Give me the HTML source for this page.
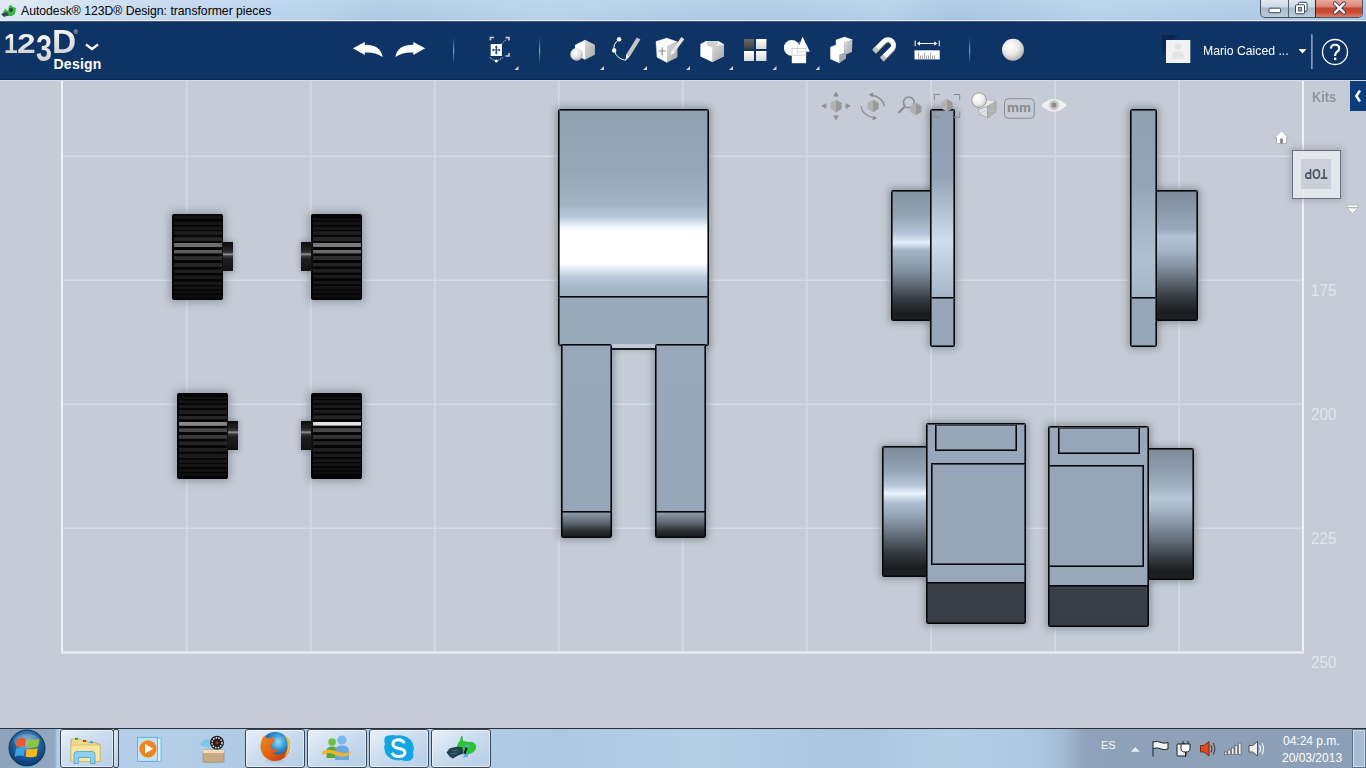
<!DOCTYPE html>
<html><head><meta charset="utf-8">
<style>
*{margin:0;padding:0;box-sizing:border-box}
html,body{width:1366px;height:768px;overflow:hidden;font-family:"Liberation Sans",sans-serif}
body{position:relative;background:#c5ccd6}
.a{position:absolute}
#title{left:0;top:0;width:1366px;height:22px;background:linear-gradient(180deg,transparent 20px,#e0ecf8 20px,#e0ecf8 21px,#4e5866 21px),linear-gradient(180deg,rgba(255,255,255,.12),rgba(255,255,255,0) 20px),linear-gradient(100deg,#dde8f3 0%,#c5d9ee 10%,#b9d3ec 20%,#b6d1ea 23%,#aec9e4 28%,#b6d1ea 40%,#adc9e5 55%,#b3cfe9 65%,#a8c5e2 70%,#b5d0ea 80%,#a9c6e3 100%)}
#tb{left:0;top:22px;width:1366px;height:59px;background:linear-gradient(180deg,#0a2d61 0,#0e3466 1px,#0e3466 57px,#032a5e 57px,#032a5e 58px,#d5d9e1 58px)}
#task{left:0;top:728px;width:1366px;height:40px;background:linear-gradient(180deg,#aac4de 0%,#b3cde6 100%);border-top:1px solid #3d4f63}
.gv{top:80px;width:1px;height:572px;background:#d6dbe3;box-shadow:1px 0 0 #cdd3dc}
.gvl{box-shadow:-1px 0 0 #cdd3dc}
.gh{left:62px;height:1px;width:1241px;background:#d6dbe3;box-shadow:0 -1px 0 #cdd3dc}
.bd{background:#eef1f5}
.lbl{left:1311px;width:40px;font-size:16.5px;color:#e2e6eb;line-height:18px;transform:scaleX(.93);transform-origin:0 0}
.sh{box-shadow:0 0 7px 2px rgba(60,68,82,.42);border-radius:2px}
.gsh{box-shadow:0 0 8px 2px rgba(60,70,85,.4)}
.ol{border:1px solid #050607;box-shadow:inset 0 0 0 1px rgba(8,9,11,.6);border-radius:1.5px}
.logo{font-weight:bold;color:#f0f0f0;background:linear-gradient(180deg,#fff,#c8c8c8);-webkit-background-clip:text;-webkit-text-fill-color:transparent}
</style></head><body>
<!-- grid -->
<div class="a gv" style="left:186px"></div>
<div class="a gv" style="left:310px"></div>
<div class="a gv" style="left:434px"></div>
<div class="a gv" style="left:558px"></div>
<div class="a gv" style="left:682px"></div>
<div class="a gv" style="left:806px"></div>
<div class="a gv gvl" style="left:931px"></div>
<div class="a gv gvl" style="left:1055px"></div>
<div class="a gv gvl" style="left:1179px"></div>
<div class="a gh" style="top:156px"></div>
<div class="a gh" style="top:280px"></div>
<div class="a gh" style="top:404px"></div>
<div class="a gh" style="top:528px"></div>
<div class="a bd" style="left:61px;top:80px;width:2px;height:573px"></div>
<div class="a bd" style="left:1302px;top:80px;width:2px;height:573px"></div>
<div class="a" style="left:61px;top:651px;width:1243px;height:3px;background:linear-gradient(180deg,#d9dde4,#e9ecf0 40%,#e9ecf0 60%,#d3d8df)"></div>
<div class="a lbl" style="top:157px">150</div>
<div class="a lbl" style="top:281px">175</div>
<div class="a lbl" style="top:405px">200</div>
<div class="a lbl" style="top:529px">225</div>
<div class="a lbl" style="top:653px">250</div>
<!--PIECES-->
<div class="a gsh" style="left:172px;top:214px;width:51px;height:86px;background:#050505;border-radius:2px"></div>
<div class="a" style="left:173.5px;top:214px;width:48px;height:86px;background:linear-gradient(180deg,#050505 0px,#050505 1.4px,#111 1.9px,#111 4.9px,#050505 5.4px,#050505 7.3px,#141414 7.8px,#141414 10.6px,#050505 11.1px,#050505 12.4px,#181818 12.9px,#181818 15.5px,#050505 16.0px,#050505 17.1px,#1e1e1e 17.6px,#1e1e1e 20.4px,#050505 20.9px,#050505 23.1px,#262626 23.6px,#262626 26.7px,#050505 27.2px,#050505 29.0px,#6e6e6e 29.5px,#6e6e6e 32.7px,#050505 33.2px,#050505 35.5px,#5c5c5c 36.0px,#5c5c5c 39.2px,#050505 39.7px,#050505 42.1px,#2e2e2e 42.6px,#2e2e2e 45.8px,#050505 46.3px,#050505 48.8px,#242424 49.3px,#242424 52.5px,#050505 53.0px,#050505 55.3px,#1f1f1f 55.8px,#1f1f1f 59.0px,#050505 59.5px,#050505 61.3px,#1b1b1b 61.8px,#1b1b1b 64.8px,#050505 65.3px,#050505 67.3px,#171717 67.8px,#171717 70.5px,#050505 71.0px,#050505 72.1px,#141414 72.6px,#141414 74.9px,#050505 75.4px,#050505 76.4px,#111 76.9px,#111 79.1px,#050505 79.6px,#050505 80.6px,#0f0f0f 81.1px,#0f0f0f 83.3px,#050505 83.8px,#050505 86px)"></div>
<div class="a" style="left:223px;top:242px;width:10px;height:29px;background:linear-gradient(180deg,#0a0a0a 0,#222 8px,#3a3a3a 11px,#a0a0a0 12px,#3a3a3a 14px,#1e1e1e 17px,#111 29px);box-shadow:0 0 5px 1px rgba(60,70,85,.35)"></div>
<div class="a gsh" style="left:311px;top:214px;width:51px;height:86px;background:#050505;border-radius:2px"></div>
<div class="a" style="left:312.5px;top:214px;width:48px;height:86px;background:linear-gradient(180deg,#050505 0px,#050505 3.8px,#111 4.3px,#111 6.3px,#050505 6.8px,#050505 7.6px,#141414 8.1px,#141414 10.4px,#050505 10.9px,#050505 12.4px,#181818 12.9px,#181818 15.4px,#050505 15.9px,#050505 17.1px,#1e1e1e 17.6px,#1e1e1e 20.4px,#050505 20.9px,#050505 23.0px,#262626 23.5px,#262626 26.7px,#050505 27.2px,#050505 29.0px,#7a7a7a 29.5px,#7a7a7a 32.7px,#050505 33.2px,#050505 35.5px,#6a6a6a 36.0px,#6a6a6a 39.2px,#050505 39.7px,#050505 42.0px,#2e2e2e 42.5px,#2e2e2e 45.7px,#050505 46.2px,#050505 48.5px,#242424 49.0px,#242424 52.2px,#050505 52.7px,#050505 54.7px,#1f1f1f 55.2px,#1f1f1f 58.3px,#050505 58.8px,#050505 60.6px,#1b1b1b 61.1px,#1b1b1b 64.1px,#050505 64.6px,#050505 66.6px,#171717 67.1px,#171717 69.9px,#050505 70.4px,#050505 71.6px,#141414 72.1px,#141414 74.5px,#050505 75.0px,#050505 76.3px,#111 76.8px,#111 79.1px,#050505 79.6px,#050505 80.6px,#0f0f0f 81.1px,#0f0f0f 83.2px,#050505 83.7px,#050505 86px)"></div>
<div class="a" style="left:301px;top:242px;width:10px;height:29px;background:linear-gradient(180deg,#0a0a0a 0,#222 8px,#3a3a3a 11px,#a0a0a0 12px,#3a3a3a 14px,#1e1e1e 17px,#111 29px);box-shadow:0 0 5px 1px rgba(60,70,85,.35)"></div>
<div class="a gsh" style="left:177px;top:393px;width:51px;height:86px;background:#050505;border-radius:2px"></div>
<div class="a" style="left:178.5px;top:393px;width:48px;height:86px;background:linear-gradient(180deg,#050505 0px,#050505 3.5px,#111 4.0px,#111 6.0px,#050505 6.5px,#050505 7.3px,#141414 7.8px,#141414 10.0px,#050505 10.5px,#050505 11.7px,#181818 12.2px,#181818 14.8px,#050505 15.3px,#050505 17.1px,#1e1e1e 17.6px,#1e1e1e 20.5px,#050505 21.0px,#050505 22.5px,#262626 23.0px,#262626 26.1px,#050505 26.6px,#050505 28.7px,#8a8a8a 29.2px,#8a8a8a 32.4px,#050505 32.9px,#050505 35.2px,#4a4a4a 35.7px,#4a4a4a 38.9px,#050505 39.4px,#050505 41.7px,#3a3a3a 42.2px,#3a3a3a 45.4px,#050505 45.9px,#050505 48.2px,#242424 48.7px,#242424 51.9px,#050505 52.4px,#050505 54.6px,#1f1f1f 55.1px,#1f1f1f 58.3px,#050505 58.8px,#050505 61.0px,#1b1b1b 61.5px,#1b1b1b 64.5px,#050505 65.0px,#050505 66.4px,#171717 66.9px,#171717 69.4px,#050505 69.9px,#050505 71.0px,#141414 71.5px,#141414 73.9px,#050505 74.4px,#050505 75.6px,#111 76.1px,#111 78.4px,#050505 78.9px,#050505 80.0px,#0f0f0f 80.5px,#0f0f0f 82.7px,#050505 83.2px,#050505 86px)"></div>
<div class="a" style="left:228px;top:421px;width:10px;height:29px;background:linear-gradient(180deg,#0a0a0a 0,#222 7px,#3a3a3a 10px,#a0a0a0 11px,#3a3a3a 13px,#1e1e1e 16px,#111 29px);box-shadow:0 0 5px 1px rgba(60,70,85,.35)"></div>
<div class="a gsh" style="left:311px;top:393px;width:51px;height:86px;background:#050505;border-radius:2px"></div>
<div class="a" style="left:312.5px;top:393px;width:48px;height:86px;background:linear-gradient(180deg,#050505 0px,#050505 3.6px,#111 4.1px,#111 6.0px,#050505 6.5px,#050505 7.1px,#141414 7.6px,#141414 9.7px,#050505 10.2px,#050505 11.4px,#181818 11.9px,#181818 14.5px,#050505 15.0px,#050505 16.8px,#1e1e1e 17.3px,#1e1e1e 20.1px,#050505 20.6px,#050505 22.2px,#262626 22.7px,#262626 25.8px,#050505 26.3px,#050505 28.6px,#e4e4e4 29.1px,#e4e4e4 32.3px,#050505 32.8px,#050505 35.1px,#474747 35.6px,#474747 38.8px,#050505 39.3px,#050505 41.7px,#353535 42.2px,#353535 45.4px,#050505 45.9px,#050505 48.1px,#242424 48.6px,#242424 51.8px,#050505 52.3px,#050505 54.6px,#1f1f1f 55.1px,#1f1f1f 58.3px,#050505 58.8px,#050505 60.4px,#1b1b1b 60.9px,#1b1b1b 63.7px,#050505 64.2px,#050505 65.5px,#171717 66.0px,#171717 68.5px,#050505 69.0px,#050505 70.1px,#141414 70.6px,#141414 72.8px,#050505 73.3px,#050505 74.4px,#111 74.9px,#111 77.1px,#050505 77.6px,#050505 78.4px,#0f0f0f 78.9px,#0f0f0f 80.9px,#050505 81.4px,#050505 86px)"></div>
<div class="a" style="left:301px;top:421px;width:10px;height:29px;background:linear-gradient(180deg,#0a0a0a 0,#222 7px,#3a3a3a 10px,#a0a0a0 11px,#3a3a3a 13px,#1e1e1e 16px,#111 29px);box-shadow:0 0 5px 1px rgba(60,70,85,.35)"></div>
<!-- torso -->
<div class="a sh" style="left:558px;top:109px;width:151px;height:237px"></div>
<div class="a sh" style="left:561px;top:345px;width:51px;height:193px"></div>
<div class="a sh" style="left:655px;top:345px;width:51px;height:193px"></div>
<div class="a ol" style="left:558px;top:109px;width:151px;height:190px;background:linear-gradient(180deg,#91a1b3 0%,#96a6b8 32%,#a3b3c5 50%,#b9c9da 57%,#eef6fd 62%,#fff 64.5%,#fff 81.5%,#e6f0f9 84%,#b9c9da 89%,#a5b5c7 95%,#a0b0c2 100%)"></div>
<div class="a ol" style="left:558px;top:296px;width:151px;height:50px;background:#99a9bb"></div>
<div class="a" style="left:610px;top:344px;width:47px;height:6px;background:#c3cad4;border-bottom:2px solid #1a1c1f"></div>
<div class="a ol" style="left:561px;top:344px;width:51px;height:194px;background:linear-gradient(180deg,#98a8ba 0px,#97a7b9 166px,#8c9aaa 168px,#5b6570 178px,#2a2d33 186px,#15161a 194px)"></div>
<div class="a" style="left:561px;top:511px;width:51px;height:2px;background:linear-gradient(180deg,#050607 50%,rgba(8,9,11,.6) 50%)"></div>
<div class="a ol" style="left:655px;top:344px;width:51px;height:194px;background:linear-gradient(180deg,#98a8ba 0px,#97a7b9 166px,#8c9aaa 168px,#5b6570 178px,#2a2d33 186px,#15161a 194px)"></div>
<div class="a" style="left:655px;top:511px;width:51px;height:2px;background:linear-gradient(180deg,#050607 50%,rgba(8,9,11,.6) 50%)"></div>
<!-- arm A -->
<div class="a sh" style="left:891px;top:190px;width:41px;height:131px"></div>
<div class="a sh" style="left:930px;top:109px;width:25px;height:238px"></div>
<div class="a ol" style="left:891px;top:190px;width:42px;height:131px;background:linear-gradient(180deg,#8493a3 0%,#93a3b5 19%,#b4c4d6 33%,#e2eefa 40%,#a5b5c7 46%,#8897a7 60%,#5d6874 73%,#353b42 84%,#1a1c1f 95%,#1e2024 100%)"></div>
<div class="a ol" style="left:930px;top:109px;width:25px;height:190px;background:linear-gradient(180deg,#90a0b2 0%,#93a3b5 35%,#b5c5d6 55%,#cfdeee 70%,#b9c9da 85%,#a4b4c6 100%)"></div>
<div class="a ol" style="left:930px;top:297px;width:25px;height:50px;background:#97a7b9"></div>
<!-- arm B -->
<div class="a sh" style="left:1156px;top:190px;width:42px;height:131px"></div>
<div class="a sh" style="left:1130px;top:109px;width:27px;height:238px"></div>
<div class="a ol" style="left:1155px;top:190px;width:43px;height:131px;background:linear-gradient(180deg,#7d8b9a 0%,#8b9aab 15%,#99a9bb 30%,#b2c2d4 35%,#a7b7c9 45%,#8593a3 58%,#5d6874 70%,#363c43 82%,#1b1d20 94%,#1e2024 100%)"></div>
<div class="a ol" style="left:1130px;top:109px;width:27px;height:190px;background:linear-gradient(180deg,#90a0b2 0%,#95a5b7 40%,#a8b8ca 65%,#afbfd0 80%,#a5b5c7 100%)"></div>
<div class="a ol" style="left:1130px;top:297px;width:27px;height:50px;background:#97a7b9"></div>
<!-- foot A -->
<div class="a sh" style="left:882px;top:447px;width:45px;height:130px"></div>
<div class="a sh" style="left:926px;top:423px;width:100px;height:201px"></div>
<div class="a ol" style="left:882px;top:446px;width:46px;height:131px;background:linear-gradient(180deg,#7d8b9a 0%,#93a3b5 18%,#b8c8da 30%,#eaf4fd 36%,#b0c0d2 43%,#8e9daf 55%,#5d6874 70%,#353b42 82%,#1a1c1f 94%,#1e2024 100%)"></div>
<div class="a ol" style="left:926px;top:423px;width:100px;height:201px;background:linear-gradient(180deg,#98a8ba 0px,#98a8ba 159px,#3a3f47 159px,#393e46 201px)"></div>
<div class="a" style="left:926px;top:582px;width:100px;height:2px;background:linear-gradient(180deg,#050607 50%,rgba(8,9,11,.6) 50%)"></div>
<div class="a" style="left:935px;top:425px;width:82px;height:26px;border:1px solid #050607;border-top:none;box-shadow:inset 0 0 0 1px rgba(8,9,11,.6);background:#97a7b9"></div>
<div class="a" style="left:931px;top:463px;width:95px;height:102px;border:1px solid #050607;box-shadow:inset 0 0 0 1px rgba(8,9,11,.6);background:#95a5b7"></div>
<!-- foot B -->
<div class="a sh" style="left:1148px;top:449px;width:46px;height:131px"></div>
<div class="a sh" style="left:1048px;top:426px;width:101px;height:201px"></div>
<div class="a ol" style="left:1147px;top:448px;width:47px;height:132px;background:linear-gradient(180deg,#7d8b9a 0%,#8c9bac 15%,#a4b4c6 30%,#b8c8da 38%,#a7b7c9 46%,#8593a3 58%,#5d6874 72%,#363c43 84%,#1b1d20 94%,#1e2024 100%)"></div>
<div class="a ol" style="left:1048px;top:426px;width:101px;height:201px;background:linear-gradient(180deg,#98a8ba 0px,#98a8ba 159px,#3a3f47 159px,#393e46 201px)"></div>
<div class="a" style="left:1048px;top:585px;width:101px;height:2px;background:linear-gradient(180deg,#050607 50%,rgba(8,9,11,.6) 50%)"></div>
<div class="a" style="left:1058px;top:428px;width:82px;height:26px;border:1px solid #050607;border-top:none;box-shadow:inset 0 0 0 1px rgba(8,9,11,.6);background:#97a7b9"></div>
<div class="a" style="left:1048px;top:465px;width:96px;height:102px;border:1px solid #050607;box-shadow:inset 0 0 0 1px rgba(8,9,11,.6);background:#95a5b7"></div>

<!--/PIECES-->
<!--NAV-->
<svg class="a" style="left:810px;top:82px" width="556" height="140" viewBox="810 82 556 140">
<defs>
<linearGradient id="hexl" x1="0" y1="0" x2="0" y2="1"><stop offset="0" stop-color="#b4b4b4"/><stop offset="1" stop-color="#a6a6a6"/></linearGradient>
<radialGradient id="vsph" cx=".4" cy=".35" r=".7"><stop offset="0" stop-color="#ffffff"/><stop offset=".6" stop-color="#ededed"/><stop offset="1" stop-color="#c4c4c4"/></radialGradient>
</defs>
<g id="hex">
<path d="M0,-6.3 L-5.6,-3.1 V3.1 L0,6.3 Z" fill="#b2b2b2"/>
<path d="M0,-6.3 L5.6,-3.1 V3.1 L0,6.3 Z" fill="#999"/>
</g>
<!-- pan -->
<use href="#hex" x="836" y="106"/>
<g fill="none" stroke="#8e8e8e" stroke-width="1.3">
<path d="M833.8,96.5 L836,92.8 L838.2,96.5 M836,93 V97"/>
<path d="M833.8,115.3 L836,119 L838.2,115.3 M836,115 V119"/>
<path d="M826.2,103.8 L822.5,106 L826.2,108.2 M822.6,106 H827"/>
<path d="M845.8,103.8 L849.5,106 L845.8,108.2 M845,106 H849.4"/>
</g>
<!-- orbit -->
<use href="#hex" x="873" y="106"/>
<path d="M870.5,95 Q882.5,96.5 884.6,106.5" fill="none" stroke="#8e8e8e" stroke-width="1.3"/>
<path d="M868.5,94.6 L873.5,92.2 L872.5,97.3 Z" fill="#8e8e8e"/>
<path d="M861,106.2 Q862,115.5 874.5,117.8" fill="none" stroke="#8e8e8e" stroke-width="1.3"/>
<path d="M877.3,118.2 L872.3,120.6 L873.3,115.6 Z" fill="#8e8e8e"/>
<!-- zoom -->
<circle cx="908.8" cy="102.4" r="5.4" fill="none" stroke="#8e8e8e" stroke-width="1.6"/>
<path d="M904.8,106.4 L898.6,112.8" stroke="#8e8e8e" stroke-width="2.2"/>
<use href="#hex" x="915.8" y="108.9"/>
<!-- fit -->
<path d="M934.3,100.2 V94.5 H940 M954,94.5 H959.7 V100.2 M934.3,111.6 V117.3 H940 M954,117.3 H959.7 V111.6" fill="none" stroke="#8a8a8a" stroke-width="1"/>
<use href="#hex" x="947" y="105.4"/>
<!-- visual style -->
<path d="M978.4,109.6 L987.6,106 V118 L978.4,113.3 Z" fill="#dfe2e6" stroke="#a0a0a0" stroke-width="0.7"/>
<path d="M987.6,106 L996,101.2 V111.7 L987.6,118 Z" fill="#b3b3b3" stroke="#9a9a9a" stroke-width="0.7"/>
<path d="M978.4,109.6 L986.5,99.5 L996,101.2 L987.6,106 Z" fill="#e9e9e9" stroke="#a8a8a8" stroke-width="0.7"/>
<path d="M978.4,113.3 L987,110.5 L996,111.7" fill="none" stroke="#c0c0c0" stroke-width="0.6"/>
<circle cx="979.1" cy="100.1" r="7.3" fill="url(#vsph)" stroke="#989898" stroke-width="0.9"/>
<!-- mm -->
<rect x="1004.5" y="98.7" width="29.8" height="19.6" rx="4" fill="none" stroke="#8e8e8e" stroke-width="1"/>
<!-- eye -->
<path d="M1041,105.3 Q1054,92.5 1067,105.3 Q1054,118 1041,105.3 Z" fill="#eef0f3"/>
<circle cx="1054" cy="105.1" r="5.2" fill="#c9c9c9"/>
<circle cx="1054" cy="105.1" r="2.6" fill="#8b8b8b"/>
<!-- home -->
<path d="M1281.4,130.8 L1274.6,137.6 H1276.6 V143.6 H1286.4 V137.6 H1288.4 Z" fill="#fff" stroke="#9a9ea4" stroke-width="0.7"/>
<rect x="1280.3" y="138.5" width="2.4" height="5.1" fill="#777"/>
<!-- down arrow -->
<rect x="1347" y="205" width="11" height="2.2" fill="#fff" stroke="#9a9ea4" stroke-width="0.6"/>
<path d="M1347,208 H1358 L1352.5,213.5 Z" fill="#fff" stroke="#9a9ea4" stroke-width="0.6"/>
</svg>
<div class="a" style="left:1007px;top:100px;font-size:13.5px;font-weight:bold;color:#8a8a8a;line-height:16px">mm</div>
<!-- viewcube -->
<div class="a" style="left:1291.5px;top:149.5px;width:49px;height:49px;background:rgba(232,234,238,.85);border:1px solid #6c7078;box-shadow:0 0 6px 2px rgba(90,100,115,.3)"></div>
<div class="a" style="left:1301px;top:159px;width:30.3px;height:30px;background:rgba(196,203,212,.85)"></div>
<div class="a" style="left:1301px;top:166px;width:30px;text-align:center;font-size:14px;font-weight:bold;color:#4f5560;line-height:16px;transform:rotate(180deg) scaleX(.8)">TOP</div>
<!-- kits -->
<div class="a" style="left:1312px;top:89px;font-size:14.5px;font-weight:bold;color:#8f949b;line-height:16px;transform:scaleX(.88);transform-origin:0 0">Kits</div>
<div class="a" style="left:1350px;top:81px;width:16px;height:30px;background:#0f3c7a"></div>
<svg class="a" style="left:1350px;top:81px" width="16" height="30" viewBox="0 0 16 30"><path d="M10,9.5 L6.3,15 L10,20.5" fill="none" stroke="#fff" stroke-width="2.4"/></svg>

<!--/NAV-->
<div id="title" class="a"></div>
<!--TITLE-->
<svg class="a" style="left:0;top:0" width="20" height="20" viewBox="0 0 20 20">
<path d="M2,14 L5,9 L8,11 L9,6 L11,5 L13,7 L16,8 L15,14 L12,16 L4,16 Z" fill="#3fb34a"/>
<path d="M1,14 L7,12 L9,15 L4,17 Z" fill="#2a4a5a"/>
<circle cx="11" cy="10" r="2" fill="#205030"/>
</svg>
<div class="a" style="left:21px;top:4px;font-size:12.2px;color:#000;white-space:nowrap;line-height:15px" id="ttl">Autodesk® 123D® Design: transformer pieces</div>
<div class="a" style="left:1260px;top:0;width:103px;height:18px;border:1px solid #4a5563;border-top:none;border-radius:0 0 5px 5px;overflow:hidden;background:linear-gradient(180deg,#dfe8f2 0,#cbd8e6 7px,#a9bbcf 8px,#b8c9da 17px)">
 <div class="a" style="left:27px;top:0;width:1px;height:17px;background:#56616e"></div>
 <div class="a" style="left:54px;top:0;width:48px;height:17px;border-left:1px solid #5a1a10;background:linear-gradient(180deg,#e9a99c 0,#d8826f 7px,#c4482e 8px,#c94a30 12px,#d9826c 17px)"></div>
</div>
<svg class="a" style="left:1260px;top:0" width="106" height="20" viewBox="1260 0 106 20">
<rect x="1269" y="8.2" width="11.5" height="4.5" rx="1" fill="#fff" stroke="#3c4450" stroke-width="1"/>
<rect x="1298.5" y="2.3" width="8.5" height="9" rx="1" fill="#fff" stroke="#3c4450" stroke-width="1"/>
<rect x="1295.5" y="4.8" width="9" height="9" rx="1" fill="#fff" stroke="#3c4450" stroke-width="1"/>
<rect x="1298.3" y="7.6" width="3.4" height="3.4" fill="#9fb0c2" stroke="#3c4450" stroke-width="0.8"/>
<path d="M1335,3.5 L1344,12.5 M1344,3.5 L1335,12.5" stroke="#3c4450" stroke-width="4.2" stroke-linecap="round"/>
<path d="M1335,3.5 L1344,12.5 M1344,3.5 L1335,12.5" stroke="#fff" stroke-width="2.4" stroke-linecap="round"/>
</svg>

<!--/TITLE-->
<div id="tb" class="a"></div>
<!--TB-->
<svg class="a" style="left:0;top:0" width="1366" height="80" viewBox="0 0 1366 80">
<defs>
<linearGradient id="sep" x1="0" y1="0" x2="0" y2="1"><stop offset="0" stop-color="#8b8673" stop-opacity="0"/><stop offset=".5" stop-color="#a59d85"/><stop offset="1" stop-color="#8b8673" stop-opacity="0"/></linearGradient>
<linearGradient id="gface" x1="0" y1="0" x2="1" y2="1"><stop offset="0" stop-color="#dcdcdc"/><stop offset="1" stop-color="#a6a6a6"/></linearGradient>
<linearGradient id="wface" x1="0" y1="0" x2="0" y2="1"><stop offset="0" stop-color="#ffffff"/><stop offset="1" stop-color="#ececec"/></linearGradient>
<linearGradient id="sq" x1="0" y1="0" x2="0" y2="1"><stop offset="0" stop-color="#ffffff"/><stop offset="1" stop-color="#d6d6d6"/></linearGradient>
<linearGradient id="sqd" x1="0" y1="0" x2="0" y2="1"><stop offset="0" stop-color="#6a6a6a"/><stop offset="1" stop-color="#3e3e3e"/></linearGradient>
<radialGradient id="sph" cx=".4" cy=".35" r=".7"><stop offset="0" stop-color="#ffffff"/><stop offset=".55" stop-color="#e8e8e8"/><stop offset="1" stop-color="#a8a8a8"/></radialGradient>
<linearGradient id="logo" x1="0" y1="0" x2="0" y2="1"><stop offset="0" stop-color="#ffffff"/><stop offset="1" stop-color="#cfcfcf"/></linearGradient>
</defs>
<!-- logo chevron -->
<path d="M86,44.5 L92,49 L98,44.5" fill="none" stroke="#fff" stroke-width="2.2"/>
<!-- undo/redo -->
<path id="undo" d="M352.9,48.3 L364.8,41.9 L364.8,44.9 C373,44.5 381.5,48 382.7,57 C377,53 371,52 364.8,52.5 L364.8,55.1 Z" fill="#fff"/>
<use href="#undo" transform="translate(778.1,0) scale(-1,1)"/>
<!-- separators -->
<rect x="453" y="37" width="1.2" height="27" fill="url(#sep)"/>
<rect x="539" y="37" width="1.2" height="27" fill="url(#sep)"/>
<rect x="969" y="37" width="1.2" height="27" fill="url(#sep)"/>
<!-- transform -->
<path d="M490.5,40.5 V37.5 H494 M505.5,37.5 H509 V40.5 M509,53 V56 H505.5" fill="none" stroke="#c9ccd3" stroke-width="1.6"/>
<path d="M501.5,44 L507.5,38.5" stroke="#c9ccd3" stroke-width="1" stroke-dasharray="1.5,1"/>
<rect x="490.7" y="44" width="11.2" height="12" fill="#fff"/>
<path d="M496.3,46 V54 M492.5,50 H500.1" stroke="#1c3f70" stroke-width="1.2"/>
<path d="M496.3,45.6 L494.8,47.4 H497.8 Z M496.3,54.4 L494.8,52.6 H497.8 Z M492.1,50 L493.9,48.5 V51.5 Z M500.5,50 L498.7,48.5 V51.5 Z" fill="#1c3f70"/>
<path d="M489.5,57 Q496.3,64 503.2,57" fill="none" stroke="#e8e8e8" stroke-width="0.9" stroke-dasharray="1.5,0.8"/>
<circle cx="496.3" cy="61" r="1.5" fill="#fff"/>
<!-- dropdown tris -->
<g fill="#d9d2c2">
<path d="M514.5,70 L518.5,66 V70 Z"/>
<path d="M600,70 L604,66 V70 Z"/>
<path d="M643,70 L647,66 V70 Z"/>
<path d="M686,70 L690,66 V70 Z"/>
<path d="M729,70 L733,66 V70 Z"/>
<path d="M772.5,70 L776.5,66 V70 Z"/>
<path d="M815.5,70 L819.5,66 V70 Z"/>
</g>
<!-- primitives -->
<path d="M585.3,39.8 L575,45.1 V55 L585.3,59.8 Z" fill="#fff"/>
<path d="M584.9,39.8 L594.9,44.8 V54.8 L584.9,59.8 Z" fill="url(#gface)"/>
<circle cx="576.6" cy="54.4" r="6.3" fill="url(#sph)"/>
<!-- sketch -->
<path d="M619.1,39.3 Q612.5,44 614.2,50.4 Q617,59.5 626,60.2" fill="none" stroke="#fff" stroke-width="1"/>
<circle cx="619.1" cy="39.2" r="2.2" fill="#fff"/>
<circle cx="614.2" cy="50.4" r="2.2" fill="#fff"/>
<path d="M636.8,37.4 L640.4,39.5 L629.8,56.6 L626.2,54.5 Z" fill="#c4c4c4"/>
<path d="M626.2,54.5 L629.8,56.6 L625.5,60.5 Z" fill="#fff"/>
<!-- construct -->
<path d="M655.9,41.4 L666.8,38 L677.4,41.8 L667,46.4 V62.6 L657,57.3 Z" fill="#fafafa" stroke="#fafafa" stroke-width="0.3"/>
<path d="M667,46.4 L677.4,41.8 V57.3 L667,62.6 Z" fill="url(#gface)"/>
<path d="M662.2,47.5 V55.5 M658.5,51 H665.8" stroke="#8f8f8f" stroke-width="1.2"/>
<path d="M681.5,37 L684.3,39.2 L674.5,52.5 L671.7,50.3 Z" fill="#e2e2e2"/>
<path d="M671.7,50.3 L674.5,52.5 L670.8,55 Z" fill="#fff"/>
<!-- modify -->
<path d="M700.4,43.9 L706,41.1 H718.4 L724,44.2 V56.3 L712.2,61.9 L700.4,56.6 Z" fill="#fff"/>
<path d="M712.2,46.5 L724,44.2 V56.3 L712.2,61.9 Z" fill="url(#gface)"/>
<path d="M706.5,41.3 Q707,47.5 712.2,47.5 Q717.5,47.5 718.2,41.3 Z" fill="#d0d0d0"/>
<!-- pattern -->
<rect x="744" y="39" width="10" height="10" fill="url(#sqd)"/>
<rect x="756" y="39" width="10.4" height="10" fill="url(#sq)"/>
<rect x="744" y="51" width="10" height="10" fill="url(#sq)"/>
<rect x="756" y="51" width="10.4" height="10" fill="url(#sq)"/>
<!-- grouping -->
<circle cx="791.8" cy="47.9" r="7.9" fill="#fff"/>
<path d="M802.6,36.8 L809.9,51.7 L796.5,51.7 Z" fill="#fff"/>
<rect x="791.8" y="48.2" width="14.3" height="15" fill="#fff"/>
<rect x="792" y="48.4" width="13.9" height="6.8" fill="none" stroke="#c8c8c8" stroke-width="0.8"/>
<path d="M799.8,41.5 Q795.5,48 798,54.5" fill="none" stroke="#c4c4c4" stroke-width="0.7"/>
<path d="M796.8,51.5 H805.5" stroke="#d0d0d0" stroke-width="0.6"/>
<!-- combine -->
<path d="M836,40 L844.5,37 L852.4,39.8 L844.4,42.8 V53.5 L839.5,55.5 V63 L830.5,59 V47 L836,45 Z" fill="#fff" stroke="#fff" stroke-width="0.4"/>
<path d="M844.4,42.8 L852.4,39.8 L852,52 L844.4,55 Z" fill="url(#gface)"/>
<path d="M839.5,54.5 L846,52 V58.5 L839.5,63 Z" fill="#a8a8a8"/>
<!-- magnet -->
<g transform="translate(888,45.2) rotate(45)">
<path d="M-8,0 A8,8 0 0 1 8,0 L8,14 L3,14 L3,0 A3,3 0 0 0 -3,0 L-3,14 L-8,14 Z" fill="#6e6a63" transform="translate(0.9,0.9)"/>
<path d="M-8,0 A8,8 0 0 1 8,0 L8,14 L3,14 L3,0 A3,3 0 0 0 -3,0 L-3,14 L-8,14 Z" fill="#fff"/>
<rect x="-8" y="10" width="5" height="4" fill="#c2c2c2"/>
<rect x="3" y="10" width="5" height="4" fill="#c2c2c2"/>
</g>
<!-- measure -->
<path d="M915.2,40.6 V46.2 M939.3,40.6 V46.2" stroke="#d8dde5" stroke-width="1.2"/>
<path d="M918,43.5 H936.5" stroke="#fff" stroke-width="1"/>
<path d="M917,43.5 L920,41.3 V45.7 Z M937.2,43.5 L934.2,41.3 V45.7 Z" fill="#fff"/>
<rect x="914.5" y="50.3" width="25.2" height="9.1" fill="#fff"/>
<path d="M918.5,59 V52.5 M920.5,59 V55.5 M922.5,59 V55.5 M924.7,59 V52.5 M926.6,59 V55.5 M928.5,59 V55.5 M930.6,59 V52.5 M932.6,59 V55.5 M934.6,59 V55.5" stroke="#8a8a8a" stroke-width="0.8"/>
<!-- material sphere -->
<circle cx="1013" cy="49.7" r="11" fill="url(#sph)"/>
<!-- avatar -->
<path d="M1162,35 H1178 L1162,54 Z" fill="#0a2753"/>
<rect x="1166" y="40" width="24.3" height="23" fill="#f2f2f2"/>
<path d="M1178,43.5 a3.2,3.2 0 1 1 -0.01,0 Z M1171.5,58.5 Q1171.5,51 1178,51 Q1184.5,51 1184.5,58.5 Z" fill="#e4e4e4"/>
<!-- dropdown -->
<path d="M1298.6,49 H1306.4 L1302.5,53.6 Z" fill="#fff"/>
<rect x="1311.3" y="34.3" width="1.2" height="34.7" fill="#b0c4da"/>
<circle cx="1335" cy="52" r="12.5" fill="none" stroke="#fff" stroke-width="1.3"/>
<path d="M1331,48.6 C1331,45.8 1332.8,44.8 1335.1,44.8 C1337.6,44.8 1339.2,46.3 1339.2,48.4 C1339.2,50.6 1337.4,51.3 1336.1,52.7 C1335.3,53.6 1335.1,54.3 1335.1,56" fill="none" stroke="#fff" stroke-width="2.1"/>
<rect x="1334" y="57.6" width="2.3" height="2.5" fill="#fff"/>
</svg>
<div class="a" style="left:1203px;top:43px;font-size:13px;color:#fff;white-space:nowrap;line-height:16px;transform:scaleX(0.94);transform-origin:0 0">Mario Caiced ...</div>

<div class="a logo" style="left:4px;top:29px;font-size:28px;line-height:30px;transform:scaleX(0.88);transform-origin:0 0">1</div>
<div class="a logo" style="left:17px;top:29px;font-size:28px;line-height:30px;transform:scaleX(1.2);transform-origin:0 0">2</div>
<div class="a logo" style="left:35.5px;top:29px;font-size:36px;line-height:40px;transform:scaleX(0.8);transform-origin:0 0">3</div>
<div class="a logo" style="left:52px;top:21.5px;font-size:33.5px;line-height:40px">D</div>
<div class="a" style="left:73.5px;top:28px;font-size:6px;color:#e8e8e8;line-height:8px">®</div>
<div class="a" style="left:53.5px;top:56px;font-size:14px;color:#fff;letter-spacing:0.25px;line-height:16px;font-weight:bold">Design</div>
<!--/TB-->
<!--TASK-->
<div class="a" style="left:0;top:728px;width:1366px;height:40px;background:linear-gradient(180deg,#25313d 0,#25313d 1px,transparent 1px),linear-gradient(90deg,#8ea3b9 0,#93a8be 55px,#b4cde6 57px,#b6cfe8 180px,#aac6e2 290px,#b5cfe8 400px,#acc8e3 560px,#b5cfe8 700px,#aac5e0 850px,#b4cee7 950px,#abc7e2 1040px,#a3bbd4 1062px,#8ea3ba 1085px,#8ba0b7 1350px)"></div>
<!-- start orb -->
<svg class="a" style="left:0;top:728px" width="1366" height="40" viewBox="0 728 1366 40">
<defs>
<radialGradient id="orb" cx=".5" cy=".35" r=".65"><stop offset="0" stop-color="#7fb0d6"/><stop offset=".6" stop-color="#1d5b98"/><stop offset="1" stop-color="#0a3a70"/></radialGradient>
<radialGradient id="orbl" cx=".5" cy="1" r=".5"><stop offset="0" stop-color="#28d0ff"/><stop offset="1" stop-color="#28d0ff" stop-opacity="0"/></radialGradient>
<linearGradient id="btn" x1="0" y1="0" x2="1" y2="1"><stop offset="0" stop-color="#e9f1f9"/><stop offset=".5" stop-color="#c9dbed"/><stop offset="1" stop-color="#b6cde5"/></linearGradient>
<radialGradient id="ff" cx=".6" cy=".35" r=".6"><stop offset="0" stop-color="#8fe0f8"/><stop offset=".5" stop-color="#2a8fd0"/><stop offset="1" stop-color="#0c3f8c"/></radialGradient>
<linearGradient id="fox" x1="0" y1="0" x2="1" y2="1"><stop offset="0" stop-color="#f08a20"/><stop offset=".6" stop-color="#e05a10"/><stop offset="1" stop-color="#b02a08"/></linearGradient>
</defs>
<circle cx="27" cy="748" r="18" fill="url(#orb)" stroke="#0d3560" stroke-width="1"/>
<ellipse cx="27" cy="741" rx="13" ry="7" fill="#fff" opacity=".18"/>
<g transform="translate(27,747.8) scale(1.18) translate(-26.2,-747.8)">
<ellipse cx="27" cy="763" rx="12" ry="4" fill="url(#orbl)"/>
<path d="M17.5,741 Q21,738.5 25.5,740 L24.5,747 Q20.5,745.5 17,747.5 Z" fill="#f05a28"/>
<path d="M27,740.3 Q31.5,742 36.5,740 L35.5,747 Q31,748.5 26.2,747.2 Z" fill="#8cc63f"/>
<path d="M16.8,748.5 Q20.5,746.5 24.3,748 L23.3,755 Q19.5,753.5 15.8,755.5 Z" fill="#3ba3e0"/>
<path d="M26,748.3 Q30.5,750 35.3,748 L34.3,755 Q29.8,756.5 25,755.2 Z" fill="#fdb813"/>
</g>
<!-- buttons -->
<g stroke="#3b4756" stroke-width="1" fill="url(#btn)">
<rect x="60.5" y="729.5" width="53" height="38" rx="2.5"/>
<rect x="113.5" y="729.5" width="5" height="38" rx="1.5"/>
<rect x="245.5" y="729.5" width="59" height="38" rx="2.5"/>
<rect x="307.5" y="729.5" width="59" height="38" rx="2.5"/>
<rect x="369.5" y="729.5" width="59" height="38" rx="2.5"/>
<rect x="431.5" y="729.5" width="59" height="38" rx="2.5"/>
</g>
<g fill="none" stroke="#f4f8fc" stroke-width="0.8" opacity=".8">
<rect x="61.5" y="730.5" width="51" height="36" rx="2"/>
<rect x="246.5" y="730.5" width="57" height="36" rx="2"/>
<rect x="308.5" y="730.5" width="57" height="36" rx="2"/>
<rect x="370.5" y="730.5" width="57" height="36" rx="2"/>
<rect x="432.5" y="730.5" width="57" height="36" rx="2"/>
</g>
<!-- explorer folder -->
<path d="M71,739 H80 L82,741 H87 L88,742.5 H96 L97,744 H100 V761.5 H71 Z" fill="#f3d98a" stroke="#c9a553" stroke-width="0.8"/>
<rect x="71" y="745" width="29" height="16.5" fill="#f8e6a0" stroke="#d0ad5a" stroke-width="0.6"/>
<rect x="75" y="737.8" width="3" height="2" fill="#10b020"/><rect x="83" y="740" width="3" height="1.8" fill="#d02020"/><rect x="90" y="741.5" width="3" height="1.6" fill="#2090e0"/>
<path d="M74,763.5 V754.5 Q74,751.5 77,751.5 H92 Q95,751.5 95,754.5 V763.5 H90.5 V757.5 H78.5 V763.5 Z" fill="#8fd0ef" stroke="#4a9ed0" stroke-width="0.8"/>
<!-- wmp -->
<rect x="140" y="738" width="21" height="23.5" fill="#d8eef8" stroke="#6ab0dc" stroke-width="0.8"/>
<rect x="137.5" y="737.3" width="20" height="24" fill="#bfe2f4" stroke="#5aa6d8" stroke-width="0.8"/>
<circle cx="148" cy="748.8" r="8.6" fill="#f08520"/>
<path d="M145,744 L153.2,748.8 L145,753.5 Z" fill="#fff"/>
<!-- box/dart -->
<path d="M200,745 Q203,737 211,740 L209,748 Z" fill="#7ac6ee" opacity=".9"/>
<circle cx="217" cy="742.8" r="7" fill="#222"/>
<circle cx="217" cy="742.8" r="5" fill="none" stroke="#eee" stroke-width="1.4" stroke-dasharray="1.5,1.2"/>
<circle cx="217" cy="742.8" r="1.5" fill="#c02020"/>
<rect x="203" y="750" width="21" height="12.3" rx="1" fill="#c8ab84" stroke="#9a8060" stroke-width="0.6"/>
<rect x="203" y="750" width="21" height="3" fill="#f4dcb2"/>
<!-- firefox -->
<ellipse cx="275.5" cy="761" rx="10" ry="1.8" fill="#8aa6c0" opacity=".3"/>
<circle cx="275.3" cy="746" r="14" fill="url(#ff)"/>
<path d="M263,737 L265,735.3 L266.8,738.5 Q270,737.5 272,738 L274.5,736.3 L273.8,740 L275.2,741.5 L272.5,742.7 Q270,744.5 271,747.5 Q273,750.5 277,749.5 L278.8,750.3 Q275.5,753.5 271.5,752.8 Q276,755.5 282,753.8 Q287.2,751 287.6,745 Q287.6,739 284,735.3 Q290.8,738.5 289.8,747 Q288.8,757 280,760.3 Q270,762.8 264,756.3 Q258.5,749 261.3,741 Z" fill="url(#fox)"/>
<path d="M284,735.3 Q290.8,738.5 289.8,747 Q289,753 284.5,757 Q288.5,748 287.6,745 Q287.6,739 284,735.3 Z" fill="#f9c23a"/>
<!-- messenger -->
<circle cx="332.1" cy="742" r="3.8" fill="#6cc04a"/>
<path d="M326.5,758 V751 Q326.5,746.5 332,746.5 Q337.5,746.5 337.5,751 V758 Z" fill="#58a838"/>
<circle cx="341.9" cy="740" r="4.6" fill="#7ab8e8"/>
<path d="M335,760 V751 Q335,745.5 342,745.5 Q349,745.5 349,751 V760 Z" fill="#6aa8dc"/>
<path d="M322,752 Q327,748 337,751.5 Q346,755 353,751 Q346,759.5 336,755 Q327,751 322.5,755 Z" fill="#f5b330"/>
<!-- skype -->
<path d="M388.5,735.5 Q385,735.5 384.3,739.5 Q384,741 385,744 Q384,746 384.2,748 Q385,758 395,760 Q398,760.5 401,760 Q404,761 407,761 Q411,761 413,757.5 Q414,755 413,752 Q414,749.5 413.8,747.5 Q412.5,737.5 402,735.5 Q399,735 396.5,735.5 Q392,734.5 388.5,735.5 Z" fill="#12a5e6"/>
<path d="M404.5,743 Q402,739.5 398,739.8 Q392.5,740.5 393,744.5 Q393.5,747.5 399,748.5 Q405,749.5 405,752.5 Q404.5,756.5 398.5,756.5 Q394,756.5 392,753" fill="none" stroke="#fff" stroke-width="3"/>
<!-- 123D creature -->
<path d="M457,752 Q456,744 460,741 L461,736.5 Q462,735 462.6,737 L463,741 Q466,741.5 468,742 Q474,740.5 476,745.5 Q477,751 471,753.5 Q463,756 457,752 Z" fill="#2ac437"/>
<path d="M446.5,752.5 L449.5,748.5 L453,747.5 L457,746.8 L462,747 L463.5,753.5 L458,755.5 L453,758.5 L450,757 L448,754.5 Z" fill="#22404c"/>
<path d="M452,751 L458,750 M450,754 L457,753" stroke="#3a7a8a" stroke-width="1"/>
<path d="M467,746.5 L464.5,754" stroke="#111" stroke-width="2"/>
<circle cx="467" cy="746.2" r="1.6" fill="#5ab0e8"/>
<path d="M463,753 L468,757 M469,753 L463.5,757.5" stroke="#4aa0e0" stroke-width="1.2"/>
<!-- tray -->
<path d="M1131,751.8 L1135.3,747 L1139.6,751.8 Z" fill="#e8eef4"/>
<path d="M1153,741.5 V756.5 M1153,742 Q1158,740.5 1161,742.5 Q1164,744 1168,742.5 V749 Q1164,750.5 1161,749 Q1158,747 1153,748.5" fill="#f2f2f2" stroke="#222" stroke-width="1"/>
<rect x="1177" y="744" width="9" height="12" rx="1" fill="#eee" stroke="#222" stroke-width="1"/>
<path d="M1183,741 V744 M1188,741 V744 M1181,744 H1190 V749 Q1190,752 1185.5,752 Q1181,752 1181,749 Z M1185.5,752 V757" fill="#fff" stroke="#222" stroke-width="1"/>
<path d="M1200.5,745.5 H1204 L1209,741.5 V756 L1204,752 H1200.5 Z" fill="#e24a1c" stroke="#6a1a08" stroke-width="0.8"/>
<path d="M1211,745 Q1213,748.8 1211,752.5 M1213.5,743 Q1216.5,748.8 1213.5,754.5" fill="none" stroke="#5a2a1a" stroke-width="1"/>
<g fill="#f4f4f4" stroke="#333" stroke-width="0.5">
<rect x="1224.5" y="752" width="2.5" height="2.5"/><rect x="1228" y="750" width="2.5" height="4.5"/><rect x="1231.5" y="748" width="2.5" height="6.5"/><rect x="1235" y="745.5" width="2.5" height="9"/><rect x="1238.5" y="743" width="2.5" height="11.5"/>
</g>
<path d="M1249,745.5 H1252.5 L1257.5,741.5 V756 L1252.5,752 H1249 Z" fill="#eee" stroke="#333" stroke-width="0.8"/>
<path d="M1259.5,745 Q1261.5,748.8 1259.5,752.5 M1262,743 Q1265,748.8 1262,754.5" fill="none" stroke="#eee" stroke-width="1.2"/>
<!-- show desktop -->
<rect x="1352.5" y="729.5" width="13" height="38" fill="#a8bdd2" stroke="#5f7286" stroke-width="1"/>
<rect x="1353.5" y="730.5" width="11" height="36" fill="none" stroke="#d8e4ef" stroke-width="0.8"/>
</svg>
<div class="a" style="left:1101px;top:739px;font-size:11px;color:#f4f6f8;line-height:13px">ES</div>
<div class="a" style="left:1283px;top:734px;font-size:12px;color:#fff;line-height:14px;white-space:nowrap">04:24 p.m.</div>
<div class="a" style="left:1282px;top:751px;font-size:12px;color:#fff;line-height:14px;white-space:nowrap">20/03/2013</div>

<!--/TASK-->
</body></html>
